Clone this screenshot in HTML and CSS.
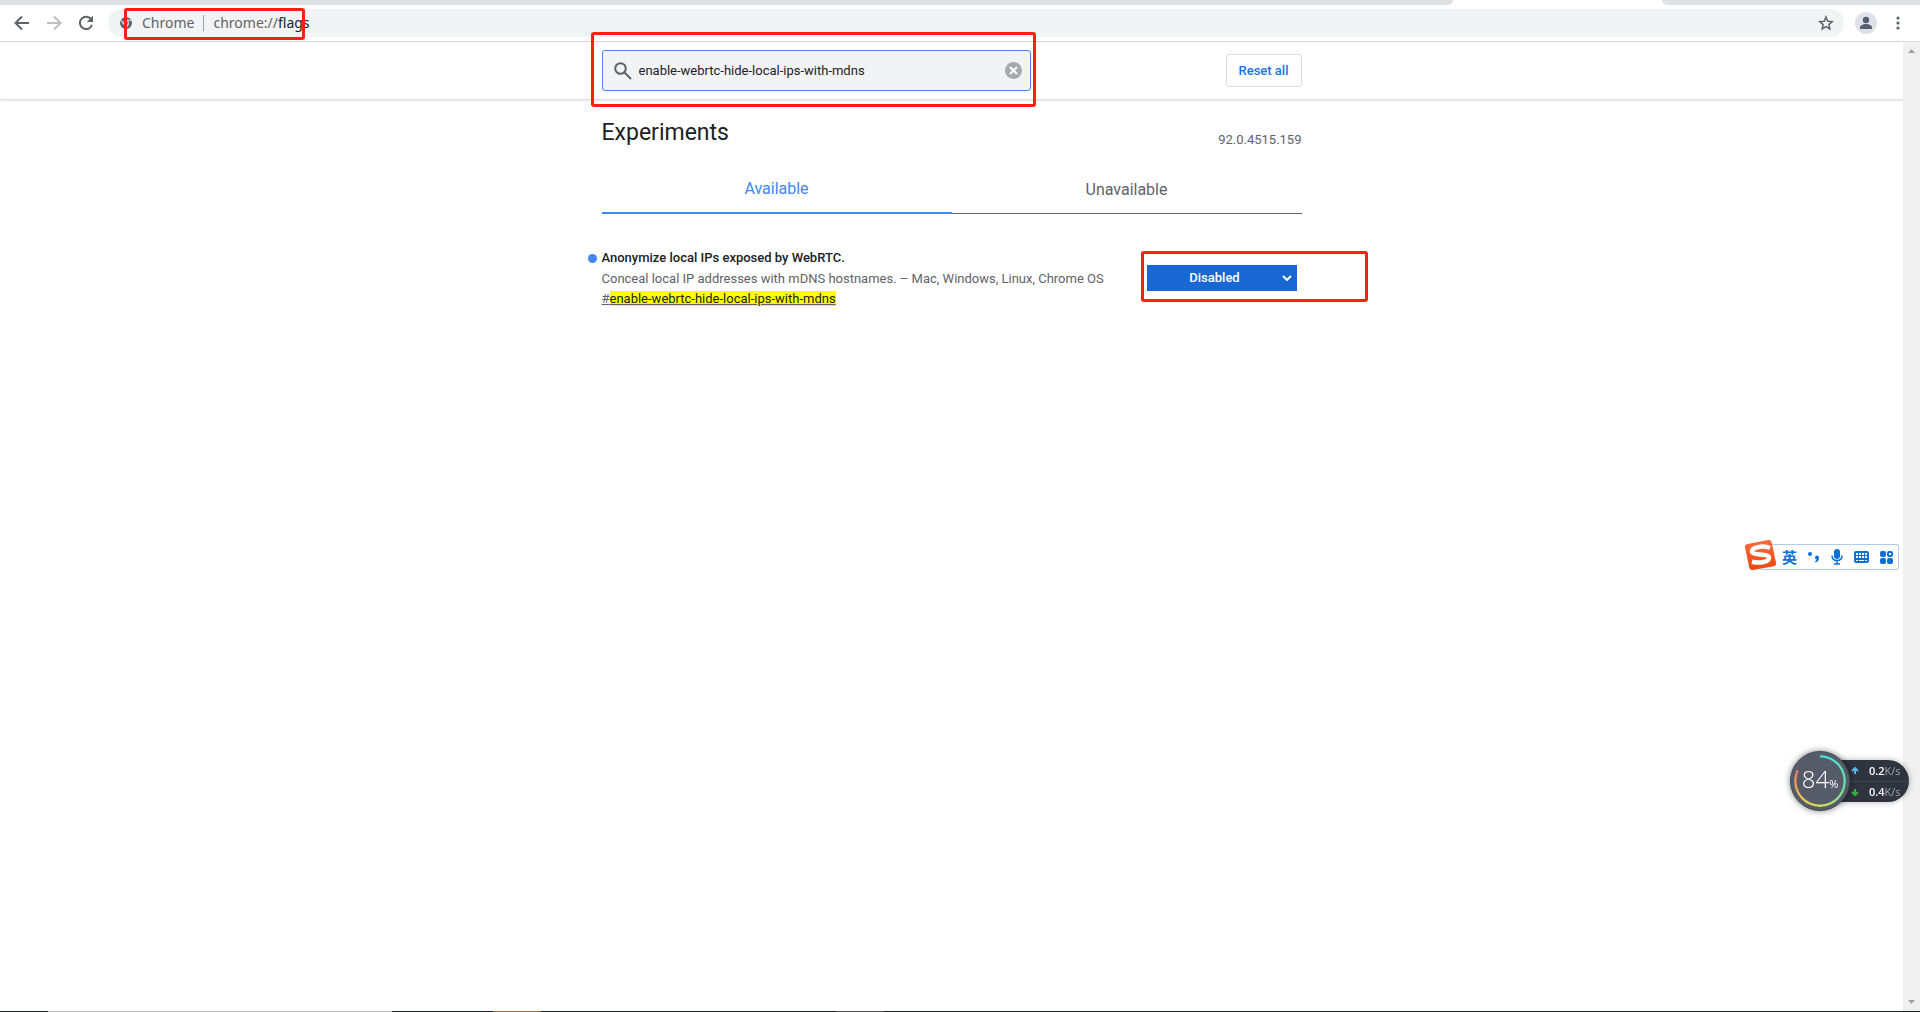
FILE: index.html
```html
<!DOCTYPE html>
<html lang="en">
<head>
<meta charset="utf-8">
<title>Experiments</title>
<link rel="stylesheet" href="styles.css">
</head>
<body>
<div class="tabstrip"><div class="tabs-before"></div><div class="tabs-after"></div></div>
<header class="toolbar">
  <div class="nav">
    <button class="icon-button" aria-label="Back"><svg width="16" height="16" viewBox="0 0 16 16"><path d="M15 8H2M8 1.5 1.5 8 8 14.5" fill="none" stroke="#5f6368" stroke-width="2"/></svg></button>
    <button class="icon-button" aria-label="Forward"><svg width="16" height="16" viewBox="0 0 16 16"><path d="M1 8h13M8 1.5 14.500 8 8 14.500" fill="none" stroke="#bcbec0" stroke-width="2"/></svg></button>
    <button class="icon-button" aria-label="Reload"><svg width="16" height="16" viewBox="0 0 16 16"><path d="M13.300 4.500A6.200 6.200 0 1 0 14 9.800" fill="none" stroke="#5f6368" stroke-width="2"/><path d="M15 .8V7H8.800z" fill="#5f6368"/></svg></button>
  </div>
  <div class="omnibox">
    <svg width="12" height="12" viewBox="0 0 12 12"><circle cx="6" cy="6" r="6" fill="#5f6368"/><circle cx="6" cy="6" r="2.400" fill="#5f6368" stroke="#f1f3f4"/><path d="M6 3.300h5.300M3.700 7.300 1 2.800M8.300 7.400 5.700 12" stroke="#f1f3f4" fill="none"/></svg>
    <span class="site">Chrome</span>
    <span class="divider"></span>
    <span class="url">chrome://<b>flags</b></span>
    <button class="icon-button star" aria-label="Bookmark"><svg width="16" height="16" viewBox="0 0 16 16"><path d="m8 2 1.750 4.200 4.500.4-3.400 3 1 4.400L8 11.700 4.150 14l1-4.400-3.400-3 4.500-.4z" fill="none" stroke="#5f6368" stroke-width="1.500"/></svg></button>
    <span class="mark mark-url"></span>
  </div>
  <button class="avatar" aria-label="Profile"><svg width="22" height="22" viewBox="0 0 22 22"><circle cx="11" cy="8" r="3.200" fill="#545d71"/><path d="M5 17v-1.500c0-2.200 3.500-3.500 6-3.500s6 1.300 6 3.500V17z" fill="#545d71"/></svg></button>
  <button class="icon-button menu" aria-label="Menu"><svg width="4" height="16" viewBox="0 0 4 16" fill="#5f6368"><circle cx="2" cy="3" r="1.600"/><circle cx="2" cy="8" r="1.600"/><circle cx="2" cy="13" r="1.600"/></svg></button>
</header>
<div class="viewport">
  <div class="page">
    <div class="page-header">
      <div class="column header-row">
        <div class="search">
          <svg width="18" height="18" viewBox="0 0 18 18" fill="none" stroke="#5f6368" stroke-width="2"><circle cx="6.500" cy="6.500" r="5.300"/><path d="m10.500 10.500 6.500 6.500"/></svg>
          <input type="text" aria-label="Search flags" value="enable-webrtc-hide-local-ips-with-mdns">
          <button class="icon-button" aria-label="Clear search"><svg width="17" height="17" viewBox="0 0 17 17"><circle cx="8.500" cy="8.500" r="8.500" fill="#a7aaad"/><path d="m5 5 7 7m0-7-7 7" stroke="#fff" stroke-width="2"/></svg></button>
          <span class="mark mark-search"></span>
        </div>
        <button class="reset">Reset all</button>
      </div>
    </div>
    <main class="column">
      <div class="title-row"><h1>Experiments</h1><span class="version">92.0.4515.159</span></div>
      <div class="tabs">
        <button class="tab selected">Available</button>
        <button class="tab">Unavailable</button>
      </div>
      <section class="experiment">
        <div class="about">
          <h2><label for="flag">Anonymize local IPs exposed by WebRTC.</label></h2>
          <p>Conceal local IP addresses with mDNS hostnames. – Mac, Windows, Linux, Chrome OS</p>
          <a href="#flag">#<mark>enable-webrtc-hide-local-ips-with-mdns</mark></a>
        </div>
        <div class="choice">
          <select id="flag"><option>Default</option><option>Enabled</option><option selected>Disabled</option></select>
          <svg class="chevron" width="10" height="6" viewBox="0 0 10 6"><path d="m1 1 4 4 4-4" fill="none" stroke="#fff" stroke-width="2"/></svg>
          <span class="mark mark-choice"></span>
        </div>
      </section>
    </main>
  </div>
  <div class="scrollbar">
    <svg width="7" height="4" viewBox="0 0 7 4"><path d="M0 4 3.500 0 7 4z" fill="#a0a0a0"/></svg>
    <svg width="7" height="4" viewBox="0 0 7 4"><path d="M0 0 3.500 4 7 0z" fill="#a0a0a0"/></svg>
  </div>
</div>
<footer class="taskbar"></footer>

<div class="ime">
  <svg class="ime-logo" width="33" height="32" viewBox="0 0 33 32"><defs><linearGradient id="flame" x2="0" y2="1"><stop stop-color="#fb6b3c"/><stop offset="1" stop-color="#ed4710"/></linearGradient></defs><path d="M3.500 5 24 1q3-.6 3.700 2.200L32 23.500q.6 3-2.200 3.700L9 31q-3 .4-3.700-2.200L1 8.500Q.6 5.600 3.500 5z" fill="url(#flame)"/><path d="M26 9C20 6.500 8 7.500 8 12.300c0 4.700 17 1.700 17 6.400 0 4.300-9 5.800-17 4" fill="none" stroke="#fff" stroke-width="4.500"/></svg>
  <span class="ime-lang">英</span>
  <svg width="12" height="12" viewBox="0 0 12 12" fill="#0a6fd6"><circle cx="2" cy="3" r="2"/><path d="M7 6.500q0-2 2-2t2 2.500q0 3-3.500 4.500L7 10.500q1.500-.8 1.700-2Q7 8.500 7 6.500z"/></svg>
  <svg width="12" height="16" viewBox="0 0 12 16"><rect x="3" width="6" height="10" rx="3" fill="#0a6fd6"/><path d="M1 6.500q0 5 5 5t5-5M6 12v3M3 15h6" fill="none" stroke="#0a6fd6" stroke-width="1.500"/></svg>
  <svg width="15" height="12" viewBox="0 0 15 12"><rect width="15" height="12" rx="2" fill="#0a6fd6"/><path d="M2 3h11M2 6h11" stroke="#fff" stroke-width="2" stroke-dasharray="2 1"/><path d="M2 9.500h2M5 9.500h5M11 9.500h2" stroke="#fff"/></svg>
  <svg width="13" height="13" viewBox="0 0 13 13" fill="#0a6fd6"><rect width="6" height="6" rx="2"/><rect y="7" width="6" height="6" rx="2"/><rect x="7" y="7" width="6" height="6" rx="2"/><rect x="8" y="1" width="4" height="4" rx="1" fill="none" stroke="#0a6fd6" stroke-width="2"/></svg>
</div>

<div class="monitor">
  <div class="speeds">
    <div class="speed"><svg width="8" height="7" viewBox="0 0 8 7"><path d="M4 7V1M1 4l3-3 3 3" fill="none" stroke="#58b8f5" stroke-width="2"/></svg><span class="rate">0.2<small>K/s</small></span></div>
    <div class="speed"><svg width="8" height="7" viewBox="0 0 8 7"><path d="M4 0v6M1 3l3 3 3-3" fill="none" stroke="#35b34a" stroke-width="2"/></svg><span class="rate">0.4<small>K/s</small></span></div>
  </div>
  <div class="gauge">
    <span class="gauge-ring"></span>
    <span class="percent">84<small>%</small></span>
  </div>
</div>
</body>
</html>
```
FILE: styles.css
```css
* { box-sizing: border-box; }
body {
  margin: 0;
  min-height: 100vh;
  display: flex;
  flex-direction: column;
  background: #fff;
  color: #202124;
  font: 13px/20px Roboto, sans-serif;
  overflow: hidden;
}
button { font: inherit; cursor: pointer; }
svg { display: block; flex: none; }
.icon-button { border: 0; padding: 0; background: none; }

.tabstrip { display: flex; gap: 209px; height: 5px; }
.tabs-before { width: 1453px; border-radius: 0 0 6px 0; background: #dee1e6; }
.tabs-after { flex: 1; border-radius: 0 0 0 6px; background: #dee1e6; }

.toolbar {
  display: flex;
  align-items: center;
  height: 37px;
  padding: 0 20px 0 14px;
  border-bottom: 1px solid #dadce0;
}
.nav { display: flex; gap: 16px; margin-right: 14px; }
.omnibox {
  position: relative;
  flex: 1;
  display: flex;
  align-items: center;
  height: 28px;
  padding: 0 10px 0 12px;
  border-radius: 14px;
  background: #f1f3f4;
  color: #5f6368;
  font: 14px/20px "Noto Sans", sans-serif;
}
.site { margin-left: 10px; }
.divider { width: 1px; height: 16px; margin: 0 9px; background: #9aa0a6; }
.url b { color: #202124; font-weight: 400; }
.star { margin-left: auto; }
.avatar {
  width: 22px;
  height: 22px;
  margin: 0 19px 0 11px;
  padding: 0;
  border: 0;
  border-radius: 50%;
  background: #dee1e6;
}

.mark {
  position: absolute;
  border: 3px solid #ff2015;
  border-radius: 3px;
  pointer-events: none;
}
.mark-url { left: 16px; top: -1px; width: 181px; height: 32px; }
.mark-search { inset: -19px -6px -17px -12px; }
.mark-choice { left: -6px; top: -14px; width: 227px; height: 51px; }

.viewport { flex: 1; display: flex; }
.page { flex: 1; }
.page-header { padding: 8px 0; box-shadow: 0 1px 3px rgba(0, 0, 0, .2); }
.column { width: 700px; margin: 0 auto; }
.header-row { display: flex; align-items: center; justify-content: space-between; }
.search {
  position: relative;
  display: flex;
  align-items: center;
  width: 429px;
  height: 41px;
  padding: 0 8px 0 11px;
  border: 1px solid #4285f4;
  border-radius: 3px;
  background: #f1f3f4;
}
.search input {
  flex: 1;
  padding: 0 7px;
  border: 0;
  outline: 0;
  background: none;
  color: #202124;
  font: inherit;
}
.reset {
  width: 76px;
  height: 33px;
  padding: 0;
  border: 1px solid #dadce0;
  border-radius: 3px;
  background: #fff;
  color: #1a73e8;
  font-weight: 500;
}

.title-row { display: flex; justify-content: space-between; padding-top: 19px; }
h1 { margin: 0; font-size: 23px; line-height: 30px; font-weight: 400; }
.version { padding-top: 12px; color: #5f6368; }
.tabs { display: flex; margin-top: 15px; }
.tab {
  flex: 1;
  height: 49px;
  padding: 2px 0 0;
  border: 0;
  border-bottom: 1px solid #5f6368;
  background: none;
  color: #5f6368;
  font-size: 16px;
}
.tab.selected { padding-top: 0; border-bottom: 2px solid #4285f4; color: #4285f4; }
.experiment { display: flex; justify-content: space-between; padding: 34px 5px 0 0; }
.about { color: #5f6368; }
h2 { position: relative; margin: 0 0 1px; color: #202124; font-size: 13px; line-height: 20px; font-weight: 500; }
h2::before {
  content: "";
  position: absolute;
  left: -14px;
  top: 6px;
  width: 9px;
  height: 9px;
  border-radius: 50%;
  background: #4285f4;
}
.about p { margin: 0; }
.about a { color: #5f6368; }
.about mark { background: #ff0; color: #202124; }
.choice { position: relative; height: 26px; margin-top: 17px; }
.choice select {
  appearance: none;
  display: block;
  width: 150px;
  height: 26px;
  padding: 0 14px 0 0;
  border: 0;
  border-radius: 0;
  background: #1967d2;
  color: #fff;
  font: 500 13px/20px Roboto, sans-serif;
  text-align: center;
  text-align-last: center;
}
.chevron { position: absolute; right: 5px; top: 10px; pointer-events: none; }

.scrollbar {
  display: flex;
  flex-direction: column;
  align-items: center;
  justify-content: space-between;
  width: 17px;
  padding: 7px 0;
  background: #f0f0f0;
}
.taskbar {
  height: 1px;
  background: linear-gradient(90deg, #202124 48px, #c0c0c0 48px 392px, #202124 392px 493px, #a56a38 493px 541px, #202124 541px 836px, #505050 836px 884px, #202124 884px);
}

.ime {
  position: fixed;
  right: 21px;
  top: 544px;
  display: flex;
  align-items: center;
  justify-content: space-between;
  width: 140px;
  height: 26px;
  padding: 0 5px 0 22px;
  border: 1px solid #b5cbe4;
  border-radius: 2px;
  background: #fff;
}
.ime-logo { position: absolute; left: -16px; top: -6px; }
.ime-lang { color: #0a6fd6; font: 700 15px/20px "Noto Sans CJK SC", sans-serif; }

.monitor { position: fixed; right: 11px; top: 751px; width: 119px; height: 60px; }
.speeds {
  position: absolute;
  right: 0;
  top: 9px;
  width: 90px;
  height: 42px;
  border-radius: 0 21px 21px 0;
  background: #30343e;
  box-shadow: 0 0 6px rgba(0, 0, 0, .3);
}
.speed {
  display: flex;
  align-items: center;
  gap: 10px;
  height: 21px;
  padding-left: 32px;
  color: #fff;
  font: 600 11px/20px "Open Sans", sans-serif;
}
.speed + .speed { border-top: 1px solid #41454f; }
.speed small { color: #a0a4ad; font-size: 11px; font-weight: 400; }
.gauge {
  position: absolute;
  left: 0;
  top: 0;
  display: flex;
  align-items: center;
  justify-content: center;
  width: 60px;
  height: 60px;
  border: 1px solid #454a56;
  border-radius: 50%;
  background: #555b69;
  box-shadow: 0 0 6px rgba(0, 0, 0, .5);
}
.gauge-ring {
  position: absolute;
  inset: 3px;
  border-radius: 50%;
  background: conic-gradient(#45dfe3, #70dda0 30%, #d5e255 50%, #e8bd52 65%, #f17861 82%, transparent 82%);
  mask: radial-gradient(circle, transparent 23px, #000 24px);
}
.percent { color: #fff; font: 300 24px/30px "Open Sans", sans-serif; }
.percent small { font-size: 11px; font-weight: 400; }
```
